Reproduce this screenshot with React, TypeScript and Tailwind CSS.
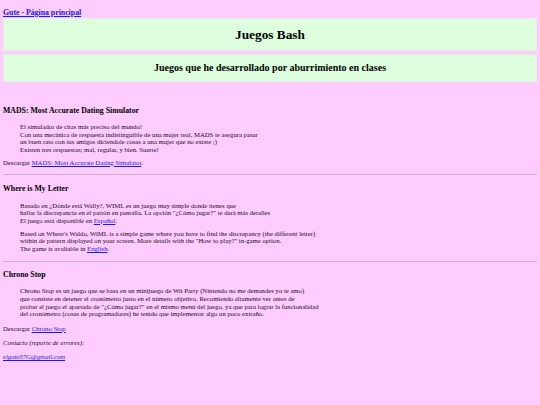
export default function App() {
  return (
    <main className="min-h-[405px] bg-[#ffccff] px-[3px] pt-[8px] pb-4 font-['Liberation_Serif',serif] text-[6.7px] leading-[7.7px] text-[#1a0a1a]">
      <a href="#" className="block h-[9px] text-[7.8px] leading-[9px] font-bold text-[#1a1aee] underline">
        Gute - Página principal
      </a>

      {/* Cabecera */}
      <div className="mt-[1px] flex h-[33px] items-center justify-center border border-[#e6ece6] bg-[#ddffdd]">
        <h1 className="text-[13.3px] leading-[15px] font-bold text-black">Juegos Bash</h1>
      </div>
      <div className="mt-[3px] flex h-[28px] items-center justify-center border border-[#e6ece6] bg-[#ddffdd]">
        <h2 className="text-[10px] leading-[12px] font-bold text-black">
          Juegos que he desarrollado por aburrimiento en clases
        </h2>
      </div>

      {/* MADS */}
      <h3 className="mt-[24px] text-[7.8px] leading-[9px] font-bold text-black">
        MADS: Most Accurate Dating Simulator
      </h3>
      <blockquote className="mt-[8px] ml-[17px]">
        El simulador de citas más preciso del mundo!
        <br />
        Con una mecánica de respuesta indistinguible de una mujer real, MADS te asegura pasar
        <br />
        un buen rato con tus amigos diciendole cosas a una mujer que no existe ;)
        <br />
        Existen tres respuestas; mal, regular, y bien. Suerte!
      </blockquote>
      <p className="mt-[5px]">
        Descargar{" "}
        <a href="#" className="text-[#1a1aee] underline">
          MADS: Most Accurate Dating Simulator
        </a>
        .
      </p>
      <hr className="mt-[7.5px] border-t border-[#c9b3c9]" />

      {/* WIML */}
      <h3 className="mt-[8.5px] text-[7.8px] leading-[9px] font-bold text-black">Where is My Letter</h3>
      <blockquote className="mt-[9px] ml-[17px]">
        <p>
          Basado en ¿Dónde está Wally?, WIML es un juego muy simple donde tienes que
          <br />
          hallar la discrepancia en el patrón en pantalla. La opción "¿Cómo jugar?" te dará más detalles
          <br />
          El juego está disponible en{" "}
          <a href="#" className="text-[#1a1aee] underline">
            Español
          </a>
          .
        </p>
        <p className="mt-[5px]">
          Based on Where's Waldo, WiML is a simple game where you have to find the discrepancy (the different letter)
          <br />
          within de pattern displayed on your screen. More details with the "How to play?" in-game option.
          <br />
          The game is avaliable in{" "}
          <a href="#" className="text-[#1a1aee] underline">
            English
          </a>
          .
        </p>
      </blockquote>
      <hr className="mt-[8px] border-t border-[#c9b3c9]" />

      {/* Chrono Stop */}
      <h3 className="mt-[8px] text-[7.8px] leading-[9px] font-bold text-black">Chrono Stop</h3>
      <blockquote className="mt-[8.5px] ml-[17px]">
        Chrono Stop es un juego que se basa en un minijuego de Wii Party (Nintendo no me demandes yo te amo)
        <br />
        que consiste en detener el cronómetro justo en el número objetivo. Recomiendo altamente ver antes de
        <br />
        probar el juego el apartado de "¿Cómo jugar?" en el mismo menú del juego, ya que para lograr la funcionalidad
        <br />
        del cronómetro (cosas de programadores) he tenido que implementar algo un poco extraño.
      </blockquote>
      <p className="mt-[6.5px]">
        Descargar{" "}
        <a href="#" className="text-[#1a1aee] underline">
          Chrono Stop
        </a>
      </p>
      <p className="mt-[7px] italic">Contacto (reporte de errores):</p>
      <p className="mt-[6.5px] italic">
        <a href="#" className="text-[#1a1aee] underline">
          elgute07G@gmail.com
        </a>
      </p>
    </main>
  )
}
